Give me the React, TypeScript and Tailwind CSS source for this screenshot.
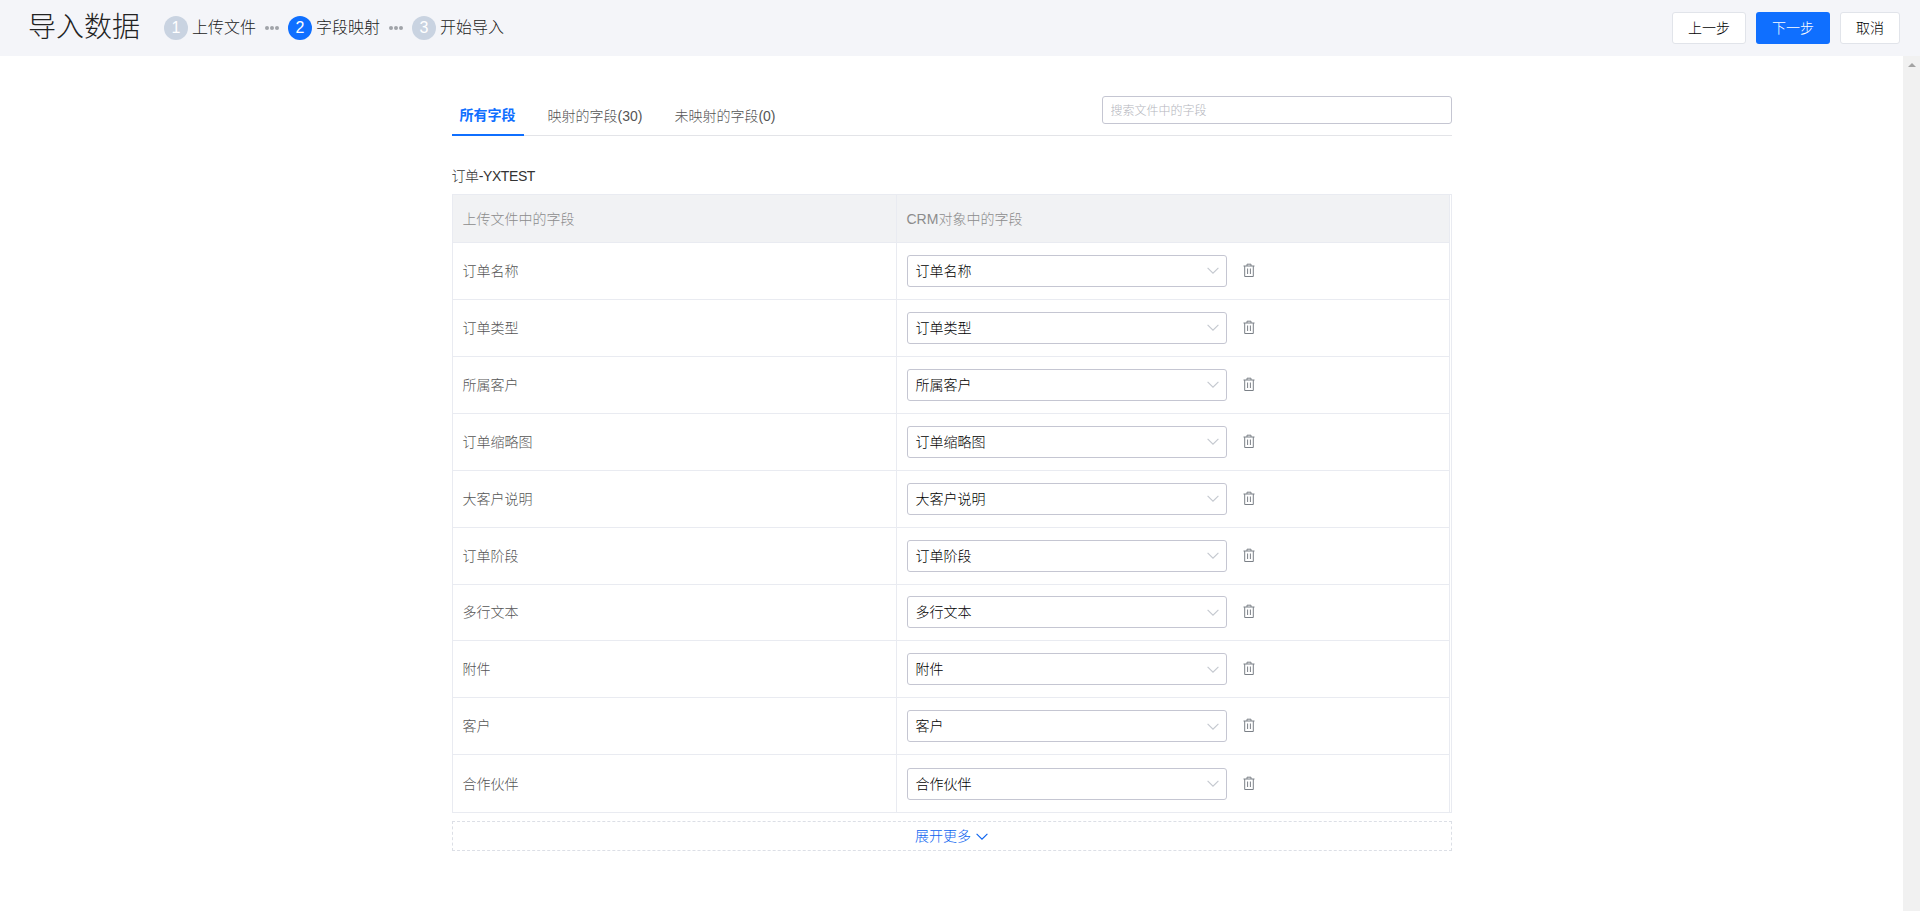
import { useState } from "react";

const rows = ["订单名称", "订单类型", "所属客户", "订单缩略图", "大客户说明", "订单阶段", "多行文本", "附件", "客户", "合作伙伴"];

function Chevron({ className }: { className: string }) {
  return (
    <svg viewBox="0 0 12 7" fill="none" stroke="currentColor" strokeWidth="1.1" className={className}>
      <path d="M.6.8L6 6.2 11.4.8" />
    </svg>
  );
}

function Trash() {
  return (
    <svg viewBox="0 0 12 14" fill="none" stroke="#7b8087" strokeWidth="1" className="h-[14px] w-[12px]">
      <path d="M.5 3h11M4 3V1.2h4V3M1.7 3v10.5h8.6V3M4.6 5.5v5.5M7.4 5.5v5.5" />
    </svg>
  );
}

function Step({ n, label, active }: { n: number; label: string; active?: boolean }) {
  return (
    <div className="flex items-center gap-1">
      <span className={`flex h-6 w-6 items-center justify-center rounded-full text-base text-white ${active ? "bg-[#0f6fff]" : "bg-[#c9d3e1]"}`}>{n}</span>
      <span className="text-base text-[#222]">{label}</span>
    </div>
  );
}

function Dots() {
  return (
    <div className="mx-[9px] flex w-[14px] items-center justify-between">
      <i className="h-1 w-1 rounded-full bg-[#a0a3a9]" />
      <i className="h-1 w-1 rounded-full bg-[#a0a3a9]" />
      <i className="h-1 w-1 rounded-full bg-[#a0a3a9]" />
    </div>
  );
}

export default function App() {
  const [tab] = useState(0);
  const tabs = ["所有字段", "映射的字段(30)", "未映射的字段(0)"];
  return (
    <div className="flex h-[911px] flex-col overflow-hidden bg-white font-['Liberation_Sans','Noto_Sans_CJK_SC',sans-serif] text-sm font-light">
      <header className="flex h-14 shrink-0 items-center bg-[#f4f5f9] pl-7 pr-5">
        <h1 className="mr-6 text-[28px] font-light text-[#222]">导入数据</h1>
        <Step n={1} label="上传文件" />
        <Dots />
        <Step n={2} label="字段映射" active />
        <Dots />
        <Step n={3} label="开始导入" />
        <div className="ml-auto flex gap-[10px]">
          <button className="h-8 w-[74px] rounded-[3px] border border-[#e1e4ea] bg-white text-black">上一步</button>
          <button className="h-8 w-[74px] rounded-[3px] bg-[#0f6fff] text-white">下一步</button>
          <button className="h-8 w-[60px] rounded-[3px] border border-[#e1e4ea] bg-white text-black">取消</button>
        </div>
      </header>
      <div className="flex min-h-0 flex-1">
        <main className="min-w-0 flex-1">
          <div className="mx-auto w-[1000px] pt-10">
            <div className="flex h-10 items-start justify-between border-b border-[#e3e4e8]">
              <div className="flex h-10 gap-4">
                {tabs.map((t, i) => (
                  <div key={t} className={`flex h-10 items-center px-2 ${i === tab ? "border-b-2 border-[#0f6fff] font-bold text-[#0f6fff]" : "text-[#555]"}`}>{t}</div>
                ))}
              </div>
              <input placeholder="搜索文件中的字段" className="h-7 w-[350px] rounded-[3px] border border-[#c5c6d2] px-2 pt-0.5 text-xs outline-none placeholder:text-[#b4b6bd]" />
            </div>
            <div className="mb-2 mt-[30px] h-5 leading-5 tracking-[-0.4px] text-[#333]">订单-YXTEST</div>
            <div className="border-b border-l border-r border-t border-[#e9ebf1] pr-px">
              <div className="border-r border-[#e9ebf1]">
                <div className="flex h-[48px] items-center border-b border-[#e9ebf1] bg-[#f1f2f4] text-[#8c8c8c]">
                  <div className="flex h-full w-[444px] items-center border-r border-[#e9ebf1] pl-[10px]">上传文件中的字段</div>
                  <div className="pl-[10px]">CRM对象中的字段</div>
                </div>
                {rows.map((r, i) => (
                  <div key={r} className={`flex h-[56.93px] items-center text-[#555] ${i < rows.length - 1 ? "border-b border-[#e9ebf1]" : ""}`}>
                    <div className="flex h-full w-[444px] items-center border-r border-[#e9ebf1] pl-[10px]">{r}</div>
                    <div className="flex items-center pl-[10px]">
                      <div className="flex h-8 w-[320px] items-center justify-between rounded-[3px] border border-[#c5c6d2] pl-2 pr-[7px] text-black">
                        {r}
                        <Chevron className="h-[7px] w-[12px] text-[#c4c8cf]" />
                      </div>
                      <div className="mb-0.5 ml-4"><Trash /></div>
                    </div>
                  </div>
                ))}
              </div>
            </div>
            <div className="mt-2 flex h-[30px] items-center justify-center gap-[5px] border border-dashed border-[#dcdfe6] text-[#0a62f0]">
              展开更多
              <Chevron className="h-[7px] w-[12px]" />
            </div>
          </div>
        </main>
        <aside className="flex w-[17px] shrink-0 justify-center bg-[#f1f1f1] pt-[7px]">
          <span className="h-0 w-0 border-x-[4px] border-b-[4px] border-x-transparent border-b-[#a3a3a3]" />
        </aside>
      </div>
    </div>
  );
}
